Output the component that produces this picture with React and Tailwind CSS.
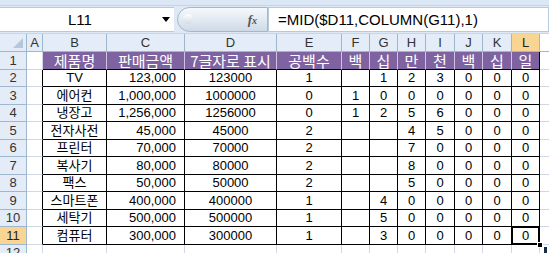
import React from "react";

const W = [
  "w-[16px]",
  "w-[64px]",
  "w-[78px]",
  "w-[92px]",
  "w-[65px]",
  "w-[28px]",
  "w-[28px]",
  "w-[28px]",
  "w-[29px]",
  "w-[28px]",
  "w-[29px]",
  "w-[28px]",
];
const LETTERS = ["A", "B", "C", "D", "E", "F", "G", "H", "I", "J", "K", "L"];
const HEAD = ["제품명", "판매금액", "7글자로 표시", "공백수", "백", "십", "만", "천", "백", "십", "일"];
const DATA = [
  ["TV", "123,000", "123000", "1", "", "1", "2", "3", "0", "0", "0"],
  ["에어컨", "1,000,000", "1000000", "0", "1", "0", "0", "0", "0", "0", "0"],
  ["냉장고", "1,256,000", "1256000", "0", "1", "2", "5", "6", "0", "0", "0"],
  ["전자사전", "45,000", "45000", "2", "", "", "4", "5", "0", "0", "0"],
  ["프린터", "70,000", "70000", "2", "", "", "7", "0", "0", "0", "0"],
  ["복사기", "80,000", "80000", "2", "", "", "8", "0", "0", "0", "0"],
  ["팩스", "50,000", "50000", "2", "", "", "5", "0", "0", "0", "0"],
  ["스마트폰", "400,000", "400000", "1", "", "4", "0", "0", "0", "0", "0"],
  ["세탁기", "500,000", "500000", "1", "", "5", "0", "0", "0", "0", "0"],
  ["컴퓨터", "300,000", "300000", "1", "", "3", "0", "0", "0", "0", "0"],
];

const FONT = "font-['Liberation_Sans','Noto_Sans_CJK_KR',sans-serif]";

function RowHeader({ n, active }) {
  return (
    <div
      className={`w-[27px] shrink-0 h-full flex items-center justify-center border-r border-b border-[#9eb6ce] text-[13px] leading-none ${
        active ? "bg-[#f9d594] text-[#222]" : "bg-[#e4ecf7] text-[#333]"
      }`}
    >
      {n}
    </div>
  );
}

export default function App() {
  return (
    <div className={`w-[549px] h-[253px] overflow-hidden bg-white ${FONT}`}>
      {/* ribbon bottom strip */}
      <div className="h-[6px] bg-[#dbe7f5] border-b border-[#c3d3e8]" />
      {/* formula bar */}
      <div className="h-[27px] flex items-stretch bg-[#dfe9f5] py-[1px]">
        <div className="w-[174px] shrink-0 bg-white border-y border-[#b7c9de] flex items-center relative">
          <span className="w-[160px] text-center text-[15px] leading-none text-black">L11</span>
          <span className="absolute left-[162px] top-[9px] w-0 h-0 border-l-[4px] border-r-[4px] border-t-[5px] border-l-transparent border-r-transparent border-t-black" />
        </div>
        <div className="w-[3px] shrink-0" />
        <div className="w-[91px] shrink-0 relative rounded-l-full border border-[#a3b6cc] bg-gradient-to-b from-[#f6f9fc] to-[#cfdae8] flex items-center justify-end pr-[10px]">
          <span className="absolute left-[5px] top-[6px] w-[10px] h-[10px] rounded-full bg-gradient-to-b from-[#ffffff] to-[#d2dbe6]" />
          <span className="font-['Liberation_Serif',serif] italic font-bold text-[13px] leading-none text-[#555]">
            f<span className="text-[10px]">x</span>
          </span>
        </div>
        <div className="flex-1 bg-white border border-[#b7c9de] flex items-center pl-[9px] text-[15px] leading-none text-black whitespace-nowrap">
          =MID($D11,COLUMN(G11),1)
        </div>
      </div>
      <div className="h-[1px] bg-[#c8d6e8]" />
      {/* column headers */}
      <div className="h-[18px] flex">
        <div className="w-[27px] shrink-0 h-full bg-[#e4ecf7] border-r border-b border-[#9eb6ce] relative">
          <svg className="absolute right-[3px] bottom-[3px]" width="10" height="10" viewBox="0 0 10 10">
            <polygon points="10,0 10,10 0,10" fill="#b6c7dd" />
          </svg>
        </div>
        {LETTERS.map((l, i) => (
          <div
            key={l}
            className={`${W[i]} shrink-0 h-full flex items-center justify-center border-r border-b border-[#9eb6ce] text-[13px] leading-none ${
              l === "L" ? "bg-[#f9d594] text-[#222]" : "bg-[#e4ecf7] text-[#333]"
            }`}
          >
            {l}
          </div>
        ))}
        <div className="flex-1 h-full border-b border-[#9eb6ce] bg-white" />
      </div>
      {/* row 1 */}
      <div className="h-[17.5px] flex">
        <RowHeader n="1" />
        <div className={`${W[0]} shrink-0 h-full border-r border-b border-[#d0d7e5]`} />
        {HEAD.map((h, i) => (
          <div
            key={i}
            className={`${W[i + 1]} shrink-0 h-full bg-[#7f63a1] text-white text-[15px] leading-none font-['Noto_Sans_CJK_KR',sans-serif] flex items-center justify-center whitespace-nowrap border-b border-b-black ${
              i < HEAD.length - 1 ? "border-r border-r-[#cfc3e0]" : "border-r border-r-black"
            }`}
          >
            {h}
          </div>
        ))}
        <div className="flex-1 h-full border-b border-[#d0d7e5]" />
      </div>
      {/* data rows */}
      {DATA.map((row, r) => (
        <div key={r} className="h-[17.5px] flex">
          <RowHeader n={r + 2} active={r === 9} />
          <div className={`${W[0]} shrink-0 h-full border-r border-r-black border-b border-b-[#d0d7e5]`} />
          {row.map((v, c) => {
            const isSel = r === 9 && c === 10;
            const align = c === 1 ? "justify-end pr-[8px]" : "justify-center";
            return (
              <div
                key={c}
                className={`${W[c + 1]} shrink-0 h-full relative flex items-center ${align} border-r border-b border-black text-[13px] leading-none text-black whitespace-nowrap`}
              >
                {v}
                {isSel && (
                  <>
                    <div className="absolute -left-[1px] -top-[1px] -right-[1px] -bottom-[1px] border-2 border-black" />
                    <div className="absolute -right-[4px] -bottom-[4px] w-[6px] h-[6px] bg-black border border-white" />
                  </>
                )}
              </div>
            );
          })}
          <div className="flex-1 h-full border-b border-[#d0d7e5]" />
        </div>
      ))}
      {/* row 12 */}
      <div className="h-[17.5px] flex">
        <RowHeader n="12" />
        {W.map((w, i) => (
          <div key={i} className={`${w} shrink-0 h-full border-r border-b border-[#d0d7e5]`} />
        ))}
        <div className="flex-1 h-full relative">
          <div className="absolute left-[4px] top-[2px] w-[3px] h-[8px] bg-[#1a2a4a]" />
        </div>
      </div>
    </div>
  );
}
